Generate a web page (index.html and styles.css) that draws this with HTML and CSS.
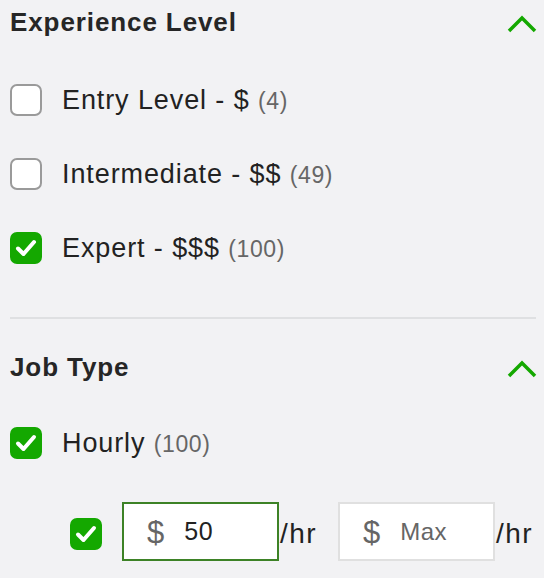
FILE: index.html
```html
<!DOCTYPE html>
<html>
<head>
<meta charset="utf-8">
<link rel="stylesheet" href="styles.css">
</head>
<body>
<div class="panel">
  <section class="section">
    <div class="head">
      <h2 class="title">Experience Level</h2>
      <svg class="chev" width="30" height="20" viewBox="0 0 30 20"><polyline points="2,17 15,4 28,17" fill="none" stroke="#14a800" stroke-width="3.5"/></svg>
    </div>
    <ul class="opts">
      <li class="opt"><span class="box"></span><span class="label">Entry Level - $ <span class="count">(4)</span></span></li>
      <li class="opt"><span class="box"></span><span class="label">Intermediate - $$ <span class="count">(49)</span></span></li>
      <li class="opt"><span class="box on"><svg width="32" height="32" viewBox="0 0 32 32"><polyline points="8,16.5 13.5,22 24,10" fill="none" stroke="#fff" stroke-width="4" stroke-linecap="round" stroke-linejoin="round"/></svg></span><span class="label">Expert - $$$ <span class="count">(100)</span></span></li>
    </ul>
  </section>
  <hr class="divider">
  <section class="section second">
    <div class="head">
      <h2 class="title">Job Type</h2>
      <svg class="chev" width="30" height="20" viewBox="0 0 30 20"><polyline points="2,17 15,4 28,17" fill="none" stroke="#14a800" stroke-width="3.5"/></svg>
    </div>
    <ul class="opts">
      <li class="opt"><span class="box on"><svg width="32" height="32" viewBox="0 0 32 32"><polyline points="8,16.5 13.5,22 24,10" fill="none" stroke="#fff" stroke-width="4" stroke-linecap="round" stroke-linejoin="round"/></svg></span><span class="label">Hourly <span class="count">(100)</span></span></li>
    </ul>
    <div class="rate">
      <span class="box on"><svg width="32" height="32" viewBox="0 0 32 32"><polyline points="8,16.5 13.5,22 24,10" fill="none" stroke="#fff" stroke-width="4" stroke-linecap="round" stroke-linejoin="round"/></svg></span>
      <div class="field active"><span class="cur">$</span><span class="val">50</span></div>
      <span class="unit">/hr</span>
      <div class="field"><span class="cur">$</span><span class="ph">Max</span></div>
      <span class="unit">/hr</span>
    </div>
  </section>
</div>
</body>
</html>
```

FILE: styles.css
```css
* { box-sizing: border-box; }
html, body { margin: 0; padding: 0; }
body {
  background: #f2f2f4;
  font-family: "Liberation Sans", Arial, sans-serif;
  color: #222;
  width: 544px;
  height: 578px;
  overflow: hidden;
}
.panel { padding: 0 8px 0 10px; }
.head {
  display: flex;
  justify-content: space-between;
  align-items: center;
  height: 44px;
}
.title {
  margin: 0;
  font-size: 26px;
  font-weight: 700;
  letter-spacing: 0.9px;
  color: #262626;
}
.chev { margin-top: 4px; margin-right: -1px; }
.opts {
  list-style: none;
  margin: 0;
  padding: 40px 0 0 0;
  display: flex;
  flex-direction: column;
  gap: 42px;
}
.opt {
  display: flex;
  align-items: center;
  height: 32px;
}
.box {
  width: 32px;
  height: 32px;
  border: 2px solid #9a9a9a;
  border-radius: 7px;
  background: #fff;
  flex: none;
  display: flex;
  align-items: center;
  justify-content: center;
}
.box.on {
  background: #14a800;
  border-color: #14a800;
}
.box.on svg { flex: none; }
.label {
  margin-left: 20px;
  font-size: 27px;
  letter-spacing: 0.9px;
  color: #222;
}
.count {
  font-size: 23px;
  color: #666;
  letter-spacing: 0.6px;
}
.divider {
  border: 0;
  border-top: 2px solid #dfe0e2;
  margin: 53px 0 0 0;
}
.section.second .head { margin-top: 26px; }
.section.second .opts { padding-top: 38px; }
.rate {
  display: flex;
  align-items: center;
  margin-top: 43px;
  padding-left: 60px;
}
.rate .box { margin-top: 5px; }
.field {
  flex: none;
  width: 157px;
  height: 59px;
  background: #fff;
  border: 2px solid #e0e0e0;
  display: flex;
  align-items: center;
  padding-left: 23px;
}
.field.active { border-color: #3d8226; margin-left: 20px; }
.cur {
  font-size: 31px;
  color: #666;
  margin-right: 20px;
  margin-top: 2px;
}
.val { font-size: 25px; color: #222; letter-spacing: 0.5px; }
.ph { font-size: 24px; color: #666; letter-spacing: 0.5px; }
.unit {
  flex: none;
  font-size: 28px;
  letter-spacing: 1.5px;
  color: #222;
  margin-left: 1px;
  margin-top: 4px;
  width: 58px;
}
```
